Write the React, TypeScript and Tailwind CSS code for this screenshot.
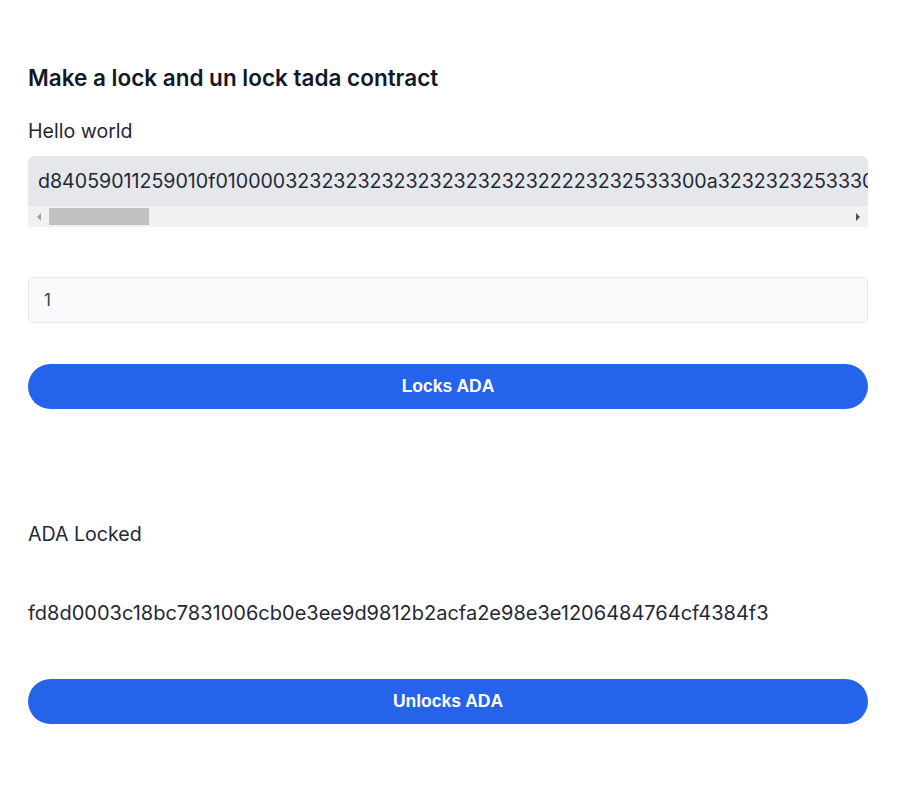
import React from "react";

const SCRIPT_HEX =
  "d84059011259010f0100003232323232323232323232222323253330" +
  "0a3232323253330035333573466e1d20000021323232325333";

export default function App() {
  return (
    <div className="min-h-screen bg-white font-['Inter','Noto_Sans',sans-serif] text-[#1f2937]">
      <div className="pl-[28px] pr-[41px] pt-[64px] pb-[40px]">
        <h2 className="text-[22.5px] leading-[28px] font-semibold text-[#111827]">
          Make a lock and un lock tada contract
        </h2>
        <p className="mt-[25px] text-[19.6px] leading-[28px]">Hello world</p>

        {/* compiled script */}
        <div className="mt-[11px] rounded-t-md bg-[#e5e7eb] overflow-hidden">
          <div className="px-[10px] py-[11px] text-[19.6px] leading-[28px] whitespace-nowrap overflow-hidden">
            {SCRIPT_HEX}
          </div>
          <div className="h-[21px] bg-[#f1f1f1] flex items-center">
            <span className="w-[21px] flex justify-center">
              <span className="w-0 h-0 border-y-[4px] border-y-transparent border-r-[4px] border-r-[#a3a3a3]" />
            </span>
            <span className="w-[100px] h-[17px] bg-[#c1c1c1]" />
            <span className="flex-1" />
            <span className="w-[21px] flex justify-center">
              <span className="w-0 h-0 border-y-[4px] border-y-transparent border-l-[4px] border-l-[#505050]" />
            </span>
          </div>
        </div>

        <input
          defaultValue="1"
          className="mt-[50px] block w-full h-[46px] rounded-md border border-[#e5e7eb] bg-[#f9fafb] px-[15px] text-[17px] text-[#374151] outline-none"
        />

        <button className="mt-[41px] w-full h-[45px] rounded-full bg-[#2563eb] text-white text-[17.5px] font-bold font-['Liberation_Sans',Arial,sans-serif]">
          Locks ADA
        </button>

        <p className="mt-[111px] text-[19.6px] leading-[28px]">ADA Locked</p>
        <p className="mt-[51px] text-[20px] leading-[28px]">
          fd8d0003c18bc7831006cb0e3ee9d9812b2acfa2e98e3e1206484764cf4384f3
        </p>

        <button className="mt-[52px] w-full h-[45px] rounded-full bg-[#2563eb] text-white text-[17.5px] font-bold font-['Liberation_Sans',Arial,sans-serif]">
          Unlocks ADA
        </button>
      </div>
    </div>
  );
}
